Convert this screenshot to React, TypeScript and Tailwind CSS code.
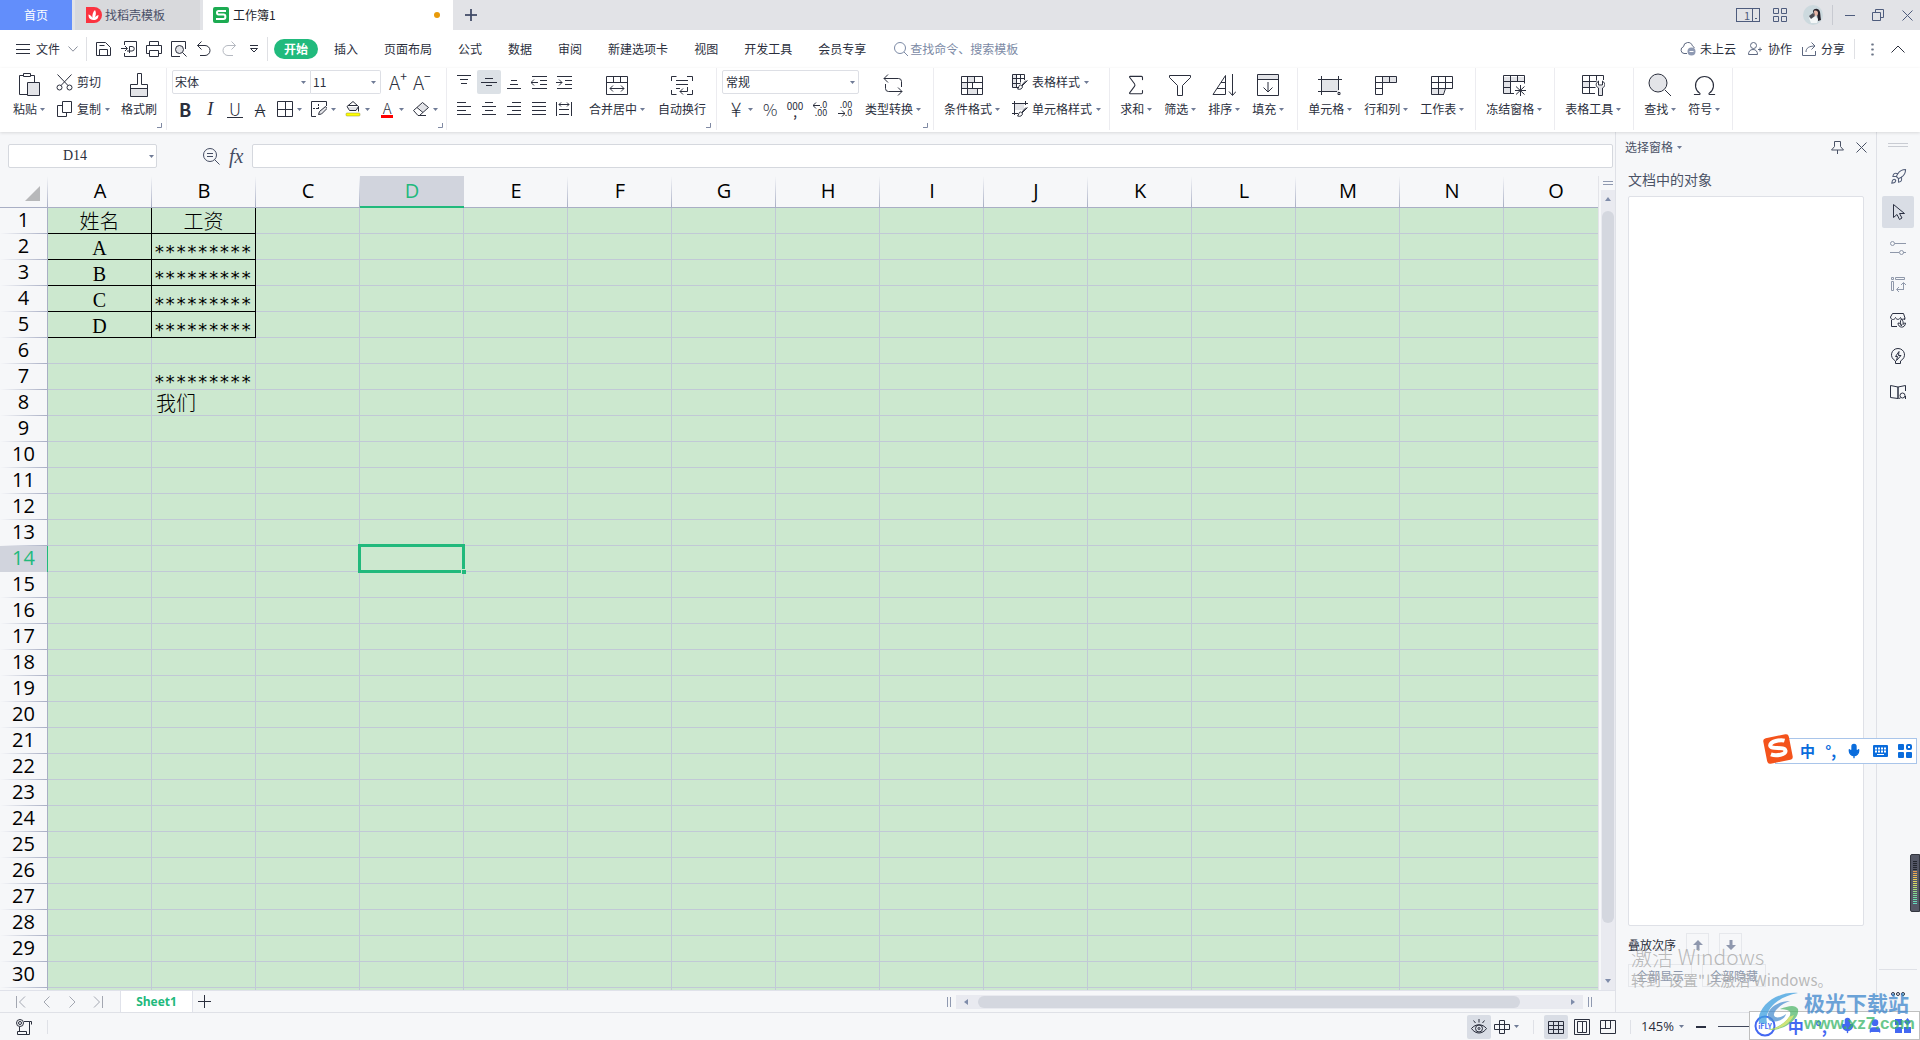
import type { ReactNode } from "react";
import { Mic, Omega, Rocket, Sigma, User } from "lucide-react";
import { clsx } from "clsx";

const COLUMNS = "ABCDEFGHIJKLMNO".split("");
const ROWS = Array.from({ length: 30 }, (_, i) => i + 1);
const STARS = "*********";

const CELLS: Record<string, string> = {
  A1: "姓名",
  B1: "工资",
  A2: "A",
  B2: STARS,
  A3: "B",
  B3: STARS,
  A4: "C",
  B4: STARS,
  A5: "D",
  B5: STARS,
  B7: STARS,
  B8: "我们",
};

const MENU_TABS = [
  "开始",
  "插入",
  "页面布局",
  "公式",
  "数据",
  "审阅",
  "新建选项卡",
  "视图",
  "开发工具",
  "会员专享",
];

interface IconProps {
  d: string;
  shade?: string;
  w?: number;
  h?: number;
  className?: string;
  children?: ReactNode;
}

function Icon({ d, shade, w = 16, h, className, children }: IconProps) {
  const height = h ?? w;
  return (
    <svg
      width={w}
      height={height}
      viewBox={`0 0 ${w} ${height}`}
      fill="none"
      stroke="currentColor"
      className={clsx("shrink-0", className)}
      aria-hidden="true"
    >
      {shade && <path d={shade} fill="#e3e4e8" stroke="none" />}
      <path d={d} />
      {children}
    </svg>
  );
}

function Caret({ className }: { className?: string }) {
  return (
    <svg
      width="5"
      height="3"
      viewBox="0 0 5 3"
      className={clsx("pointer-events-none shrink-0 fill-[#6f7b96]", className)}
      aria-hidden="true"
    >
      <path d="M0 0h5L2.5 3z" />
    </svg>
  );
}

function Group({ className, children }: { className?: string; children: ReactNode }) {
  return (
    <div className={clsx("flex h-[62px] shrink-0 border-r border-[#ececf0]", className)}>
      {children}
    </div>
  );
}

function Corner() {
  return <Icon w={5} d="M4.5 0v4.5H0" className="mb-0.5 self-end text-[#7f89a3]" />;
}

interface BigButtonProps {
  label: string;
  caret?: boolean;
  children: ReactNode;
}

function BigButton({ label, caret = true, children }: BigButtonProps) {
  return (
    <button className="flex shrink-0 flex-col items-center pt-[5px]">
      <span className="flex h-6 items-center justify-center">{children}</span>
      <span className="mt-1 flex items-center gap-[3px] leading-4 whitespace-nowrap">
        {label}
        {caret && <Caret />}
      </span>
    </button>
  );
}

function ToolButton({
  label,
  caret,
  children,
}: {
  label: string;
  caret?: boolean;
  children: ReactNode;
}) {
  return (
    <button aria-label={label} className="flex h-6 items-center gap-1">
      <span className="flex w-4 items-center justify-center">{children}</span>
      {caret && <Caret />}
    </button>
  );
}

function AlignButton({ label, d, active }: { label: string; d: string; active?: boolean }) {
  return (
    <button
      aria-label={label}
      className={clsx(
        "flex h-6 w-6 items-center justify-center rounded-xs",
        active && "bg-[#dce1e6]",
      )}
    >
      <Icon d={d} />
    </button>
  );
}

function TitleBar() {
  return (
    <header className="flex h-[30px] shrink-0 items-stretch bg-[#e2e3e7]">
      <button className="w-[72px] bg-[#628efb] text-white">首页</button>
      <button className="ml-[3px] flex w-[125px] items-center gap-[3px] bg-[#d8d9dc] pl-[11px] text-[#4a5068]">
        <svg width="16" height="16" viewBox="0 0 16 16" aria-hidden="true">
          <path d="M0 0h8a8 8 0 0 1 0 16H0z" fill="#fb3340" />
          <path
            d="M7.500 13C3 12.500 2.500 10 2.500 7.500c2 .5 3.500 2 4 3.500C6 8 7 4.500 9 3c1.500 2.500 1 5.500-.5 8 .8-1.500 2-2.500 4-3 0 3-1.500 5-5 5z"
            fill="#fff"
          />
        </svg>
        找稻壳模板
      </button>
      <button className="ml-[3px] flex w-[250px] items-center gap-1 bg-white pr-[13px] pl-[10px] text-[#1c1f2b]">
        <svg width="16" height="16" viewBox="0 0 16 16" aria-hidden="true">
          <rect width="16" height="16" rx="2" fill="#1cab52" />
          <path
            d="M13 4H5.500C3.500 4 3.500 7.500 5.500 7.500h5c2.500 0 2.500 4.500 0 4.500H3"
            fill="none"
            stroke="#fff"
            strokeWidth="2"
          />
        </svg>
        工作簿1
        <span className="ml-auto h-1.5 w-1.5 rounded-full bg-[#e89a0a]" />
      </button>
      <button aria-label="新建标签" className="ml-3 text-[#3f4a66]">
        <Icon w={12} d="M6 0v12M0 6h12">
          <path d="M6 0v12M0 6h12" strokeWidth="1.5" />
        </Icon>
      </button>
      <div className="ml-auto flex items-center pr-[7px] text-[#4e5c7d]">
        <button
          aria-label="窗口布局"
          className="mr-[13px] flex h-3.5 w-6 items-center justify-end border border-current text-[11px] leading-3"
        >
          <span className="pr-0.5">1</span>
          <Icon w={7} h={12} d="M.5 0v12M3 9.500h2" />
        </button>
        <button aria-label="应用" className="mr-4">
          <Icon w={14} d="M.5.5h5v5h-5zM8.500.5h5v5h-5zM.5 8.500h5v5h-5zM8.500 8.500h5v5h-5z" />
        </button>
        <button aria-label="账号" className="mr-[9px]">
          <svg width="20" height="20" viewBox="0 0 20 20" aria-hidden="true">
            <circle cx="10" cy="10" r="10" fill="#ccd9de" />
            <path d="M10 6c1-3 6-3 7 1 .5 3 .5 6 1 8l-3 1-1-7-3 1z" fill="#26222b" />
            <path d="M11 6c2-1 4 0 4 2s-1 3-2 3-2-2-2-5z" fill="#e6b7a8" />
            <path d="M6 13l6-2 3 3-1 4H8z" fill="#f3f6f7" />
            <path d="M6 11l4-3 2 3-4 3z" fill="#4b4a52" />
          </svg>
        </button>
        <span className="h-5 w-px bg-[#c8cad1]" />
        <button aria-label="最小化" className="ml-3">
          <Icon w={10} d="M0 5.500h10" />
        </button>
        <button aria-label="还原" className="ml-[17px]">
          <Icon w={12} d="M.5 3.500h8v8h-8zM3.500 3.500v-3h8v8h-3" />
        </button>
        <button aria-label="关闭" className="ml-[18px]">
          <Icon w={11} d="M.5.5l10 10M10.500.5l-10 10" />
        </button>
      </div>
    </header>
  );
}

function MenuBar() {
  return (
    <nav className="flex h-[38px] shrink-0 items-center bg-white">
      <button className="ml-4 flex items-center gap-1.5">
        <Icon w={14} d="M0 2.500h14M0 7.500h14M0 11.500h14" />
        文件
        <Icon w={10} h={6} d="M.5.5L5 5.200 9.500.5" className="ml-0.5 text-[#8a8f9c]" />
      </button>
      <span className="ml-2 h-6 w-px bg-[#dfe0e4]" />
      <div className="ml-[9px] flex items-center gap-[9px]">
        <button aria-label="保存">
          <Icon d="M.5 14.500v-13h9l5 5v8zM3.500 14.500v-6h8v6M3.500 4.500h5" />
        </button>
        <button aria-label="输出为PDF">
          <Icon d="M3.500 4V.5h12v15h-12V12M0 7.500h6M4 5l2.500 2.500L4 10M8.500 12V5.500H11a2 2 0 0 1 0 4.500H6" />
        </button>
        <button aria-label="打印">
          <Icon d="M3.500 4.500v-4h9v4M3.500 12.500h-3v-8h15v8h-3M3.500 9.500h9v6h-9z" />
        </button>
        <button aria-label="打印预览">
          <Icon d="M14.500 8V.5H.5v15H9M11.500 11.500l4 4">
            <circle cx="8.500" cy="8.500" r="4" fill="#e3e4e8" />
          </Icon>
        </button>
        <button aria-label="撤销">
          <Icon d="M5.500.5L1.500 4.500l4 4M1.500 4.500h7.500a5 5 0 0 1 0 10H4" />
        </button>
        <button aria-label="恢复" className="text-[#b5b9c1]">
          <Icon d="M10.500.5l4 4-4 4M14.500 4.500H7a5 5 0 0 0 0 10h5" />
        </button>
        <button aria-label="自定义" className="flex w-4 justify-center">
          <Icon w={8} d="M0 .5h8M.5 3.500h7L4 7z" />
        </button>
      </div>
      <span className="ml-[5px] h-6 w-px bg-[#dfe0e4]" />
      <div className="ml-[3px] flex items-center">
        {MENU_TABS.map((tab, i) => (
          <button
            key={tab}
            className={clsx(
              "mx-[3px] h-5 rounded-full px-2.5 leading-5 whitespace-nowrap",
              i === 0 && "bg-[#21ba7d] font-bold text-white",
            )}
          >
            {tab}
          </button>
        ))}
      </div>
      <label className="ml-[15px] flex items-center gap-0.5 text-[#7c8aa5]">
        <Icon w={14} d="M10 10l4 4">
          <circle cx="6" cy="6" r="5.500" />
        </Icon>
        <input
          aria-label="查找命令"
          placeholder="查找命令、搜索模板"
          className="w-32 bg-transparent outline-none placeholder:text-[#7c8aa5]"
        />
      </label>
      <div className="ml-auto flex shrink-0 items-center pr-[15px] text-[#2b2f3d]">
        <button className="flex items-center gap-1">
          <Icon
            d="M7 12.500H4a3.500 3.500 0 0 1-.5-6.800 4.500 4.500 0 0 1 8.800-1 4 4 0 0 1 2 2.300"
            className="text-[#5d6880]"
          >
            <circle cx="11.500" cy="10.500" r="4" fill="#8f9ab3" stroke="none" />
            <path d="M9.500 10.500h4" stroke="#fff" />
          </Icon>
          未上云
        </button>
        <button className="ml-3 flex items-center gap-1.5">
          <Icon
            w={14}
            d="M.5 12.500c0-3 1.500-5 4.500-5s4.500 2 4.500 5zM10 7.500h4M12 5.500v4"
            className="text-[#5d6880]"
          >
            <circle cx="5.500" cy="3.500" r="3" />
          </Icon>
          协作
        </button>
        <button className="ml-[10px] flex items-center gap-[5px]">
          <Icon
            w={14}
            d="M.5 5v8.500h13V9M4 10c0-4 3-6 9-6M9.500.5L13 4 9.500 7.500"
            className="text-[#5d6880]"
          />
          分享
        </button>
        <span className="ml-[9px] h-5 w-px bg-[#dfe0e4]" />
        <button aria-label="更多" className="ml-4">
          <Icon w={3} h={13} d="M.5 1.500h2M.5 6.500h2M.5 11.500h2" className="text-[#6b7486]">
            <path d="M.5 1.500h2M.5 6.500h2M.5 11.500h2" strokeWidth="2" />
          </Icon>
        </button>
        <button aria-label="收起功能区" className="ml-[17px]">
          <Icon w={14} h={8} d="M.5 7.500L7 1l6.500 6.500" />
        </button>
      </div>
    </nav>
  );
}

function Glyph({ children, className }: { children: ReactNode; className?: string }) {
  return <span className={className}>{children}</span>;
}

function Ribbon() {
  return (
    <div className="z-10 flex h-16 shrink-0 bg-white shadow-[0_1px_3px_rgba(0,0,0,0.12)]">
      <Group className="gap-[11px] pr-1 pl-[13px]">
        <BigButton label="粘贴">
          <Icon
            w={24}
            shade="M11 10h12v13H11z"
            d="M6.500 2.500h-4v19h8M13.500 2.500h4v7M6.500.5h7v3h-7zM10.500 9.500h12v13h-12z"
          />
        </BigButton>
        <div className="flex flex-col gap-[3px] pt-0.5">
          <button className="flex h-6 items-center gap-1">
            <Icon w={17} d="M1.500.5l10.500 11M15.500.5L5 11.500">
              <circle cx="3.500" cy="13.500" r="2.500" />
              <circle cx="13.500" cy="13.500" r="2.500" />
            </Icon>
            剪切
          </button>
          <button className="flex h-6 items-center gap-1">
            <Icon w={17} d="M6.500.5h9v11h-9zM6.500 4.500h-5v11h9v-4" />
            复制
            <Caret />
          </button>
        </div>
        <BigButton label="格式刷" caret={false}>
          <Icon
            w={24}
            shade="M4 16h16v7H4z"
            d="M10.500.5h4v11h6v12h-17v-12h7zM3.500 15.500h17"
          />
        </BigButton>
        <span className="-ml-[11px] flex">
          <Corner />
        </span>
      </Group>

      <Group className="pr-[3px] pl-[5px]">
        <div className="flex flex-col gap-[3px] pt-0.5">
          <div className="flex items-center">
            <div className="flex h-6 w-[139px] items-center rounded-l-xs border border-[#dddfe5] pr-1">
              <select aria-label="字体" className="flex-1 appearance-none pl-0.5 outline-none">
                <option>宋体</option>
              </select>
              <Caret />
            </div>
            <div className="flex h-6 w-[70px] items-center rounded-r-xs border border-l-0 border-[#dddfe5] pr-1">
              <select aria-label="字号" className="flex-1 appearance-none pl-0.5 outline-none">
                <option>11</option>
              </select>
              <Caret />
            </div>
            <button aria-label="增大字号" className="ml-2 flex h-6">
              <Glyph className="text-[19px] leading-6 font-light">A</Glyph>
              <span className="text-[12px] leading-3">+</span>
            </button>
            <button aria-label="减小字号" className="ml-1.5 flex h-6">
              <Glyph className="text-[19px] leading-6 font-light">A</Glyph>
              <span className="text-[12px] leading-3">−</span>
            </button>
          </div>
          <div className="flex gap-[9px] pl-[5px]">
            <ToolButton label="加粗">
              <Glyph className="text-[18px] leading-5 font-bold">B</Glyph>
            </ToolButton>
            <ToolButton label="倾斜">
              <Glyph className="font-['Liberation_Serif',serif] text-[19px] leading-5 italic">
                I
              </Glyph>
            </ToolButton>
            <ToolButton label="下划线">
              <Glyph className="border-b border-current px-0.5 text-[17px] leading-4 font-light">
                U
              </Glyph>
            </ToolButton>
            <ToolButton label="删除线">
              <Glyph className="px-0.5 text-[18px] leading-5 font-light line-through decoration-1">
                A
              </Glyph>
            </ToolButton>
            <ToolButton label="边框" caret>
              <Icon d="M.5.5h15v15H.5zM.5 8.500h15M8.500.5v15" />
            </ToolButton>
            <ToolButton label="绘制边框" caret>
              <Icon
                d="M5 15.500H.5V.5h15V5M7.500 13.500l1-3 6-5 1.500 2-5.500 5.500z"
                shade="M8 13l1-3 6-5 1 2-5 5z"
              >
                <path d="M2 7.500h6M7.500 3v6" strokeDasharray="2 1" />
              </Icon>
            </ToolButton>
            <ToolButton label="填充颜色" caret>
              <Icon
                d="M2 5.500L8 .5l5.500 5-2.500 4H4.500zM13.500 5.500v5M3 4.500h9"
                shade="M3 6h10l-2 3H5z"
              >
                <rect
                  x="1"
                  y="12"
                  width="14"
                  height="3"
                  rx="1"
                  fill="#ff0"
                  stroke="#8f8f3a"
                  strokeWidth=".5"
                />
              </Icon>
            </ToolButton>
            <ToolButton label="字体颜色" caret>
              <Glyph className="border-b-3 border-[#f00] px-0.5 text-[15px] leading-[14px] font-light">
                A
              </Glyph>
            </ToolButton>
            <ToolButton label="清除" caret>
              <Icon
                d="M.5 9.500L9.500 1.500l6 5-9 8H5zM4 6.500l6 5M5 14.500h8"
                shade="M5 6l5-4 5 5-5 4z"
              />
            </ToolButton>
          </div>
        </div>
        <Corner />
      </Group>

      <Group className="gap-[13px] pr-[5px] pl-[5px]">
        <div className="flex flex-col gap-[3px] pt-0.5">
          <div className="flex gap-px">
            <AlignButton label="顶端对齐" d="M1 1.500h14M4 5.500h8M5 9.500h6" />
            <AlignButton label="垂直居中" active d="M4 4.500h8M0 8.500h16M5 11.500h6" />
            <AlignButton label="底端对齐" d="M5 6.500h6M4 10.500h8M1 14.500h14" />
            <AlignButton
              label="减少缩进量"
              d="M1 2.500h15M9 6.500h7M9 10.500h7M1 14.500h15M0 8.500h7M3 5.500l-3 3 3 3"
            />
            <AlignButton
              label="增加缩进量"
              d="M1 2.500h15M9 6.500h7M9 10.500h7M1 14.500h15M0 8.500h6M3 5.500l3 3-3 3"
            />
          </div>
          <div className="flex gap-px">
            <AlignButton label="左对齐" d="M1 1.500h9M1 5.500h14M1 9.500h9M1 13.500h14" />
            <AlignButton label="居中" d="M4 1.500h8M1 5.500h14M4 9.500h8M1 13.500h14" />
            <AlignButton label="右对齐" d="M6 1.500h9M1 5.500h14M6 9.500h9M1 13.500h14" />
            <AlignButton label="两端对齐" d="M1 1.500h14M1 5.500h14M1 9.500h14M1 13.500h14" />
            <AlignButton
              label="分散对齐"
              d="M.5 1v14M15.500 1v14M3 3.500h10M5 1.500l-2 2 2 2M11 1.500l2 2-2 2M3 8.500h10M3 13.500h10"
            />
          </div>
        </div>
        <BigButton label="合并居中">
          <Icon
            w={24}
            d="M1.500 3.500h21v18h-21zM1.500 9.500h21M8.500 3.500v6M15.500 3.500v6M5 15.500h14M8 12.500l-3 3 3 3M16 12.500l3 3-3 3"
          />
        </BigButton>
        <BigButton label="自动换行" caret={false}>
          <Icon
            w={24}
            d="M1.500 8V3.500h5M17 3.500h5.500V8M1.500 17v4.500h5M17 21.500h5.500V17M6 7.500h12M6 11.500h12M6 15.500h4M17.500 14v4.500H10M13 15.500l-3 3 3 3"
          />
        </BigButton>
        <span className="-ml-[13px] flex">
          <Corner />
        </span>
      </Group>

      <Group className="gap-1.5 pr-[5px] pl-[5px]">
        <div className="flex flex-col gap-[3px] pt-0.5">
          <div className="flex h-6 w-[137px] items-center rounded-xs border border-[#dddfe5] pr-[3px]">
            <select aria-label="数字格式" className="flex-1 appearance-none pl-[3px] outline-none">
              <option>常规</option>
            </select>
            <Caret />
          </div>
          <div className="flex gap-[9px] pl-1.5">
            <ToolButton label="货币" caret>
              <Glyph className="text-[20px] leading-5 font-light">¥</Glyph>
            </ToolButton>
            <ToolButton label="百分比">
              <Glyph className="text-[16px] leading-5 font-light">%</Glyph>
            </ToolButton>
            <ToolButton label="千位分隔">
              <span className="flex flex-col items-center text-[10px] leading-[7px]">
                <span>000</span>
                <span className="font-bold">,</span>
              </span>
            </ToolButton>
            <ToolButton label="增加小数位数">
              <span className="flex flex-col items-end text-[9px] leading-2 whitespace-nowrap">
                <span className="flex items-center">
                  <Icon w={7} d="M0 3.500h7M3 .5l-3 3 3 3" />
                  .0
                </span>
                <span>.00</span>
              </span>
            </ToolButton>
            <ToolButton label="减少小数位数">
              <span className="flex flex-col items-end text-[9px] leading-2 whitespace-nowrap">
                <span>.00</span>
                <span className="flex items-center">
                  <Icon w={7} d="M0 3.500h7M4 .5l3 3-3 3" />
                  .0
                </span>
              </span>
            </ToolButton>
          </div>
        </div>
        <BigButton label="类型转换">
          <Icon
            w={24}
            d="M7 1.500l-4 4 4 4M3 5.500h14.500a3 3 0 0 1 3 3V14M17 14.500l4 4-4 4M21 18.500H7.500a3 3 0 0 1-3-3V11"
          />
        </BigButton>
        <span className="-ml-1 flex">
          <Corner />
        </span>
      </Group>

      <Group className="gap-3 pr-2 pl-2.5">
        <BigButton label="条件格式">
          <Icon
            w={24}
            shade="M8 4h7v6H8zM8 16h10v5H8zM2 10h6v6H2z"
            d="M1.500 3.500h21v18h-21zM1.500 9.500h21M1.500 15.500h21M7.500 3.500v18M14.500 3.500v6M12.500 9.500v6M17.500 15.500v6"
          />
        </BigButton>
        <div className="flex flex-col gap-[3px] pt-0.5">
          <button className="flex h-6 items-center gap-1 whitespace-nowrap">
            <Icon
              shade="M1 1h4v12H1z"
              d="M7 13.500H.5V.5h12V6M.5 4.500h12M.5 9.500h8M4.500.5v13M8.500.5v8M15.500 6.500L10 12M8.500 11c-2 0-1.500 3-3 4 3 1 5-.5 5-2.500zM10 11l4-4.500"
            />
            表格样式
            <Caret />
          </button>
          <button className="flex h-6 items-center gap-1 whitespace-nowrap">
            <Icon
              shade="M3 3h9v6H3z"
              d="M2.500 0v14M0 2.500h16M13.500 0v4M0 12.500h6M15.500 6.500L10 12M8.500 11c-2 0-1.500 3-3 4 3 1 5-.5 5-2.500zM10 11l4-4.500"
            />
            单元格样式
            <Caret />
          </button>
        </div>
      </Group>

      <Group className="gap-3 pr-[13px] pl-2.5">
        <BigButton label="求和">
          <Sigma size={26} strokeWidth={1} />
        </BigButton>
        <BigButton label="筛选">
          <Icon w={24} d="M1.500 2.500h21v2l-8 8v10h-5v-10l-8-8z" />
        </BigButton>
        <BigButton label="排序">
          <Icon
            w={24}
            d="M1 21.500L13.500 2.500v19zM5 15.500h8.500M9 9.500h4.500M20.500 1v21M17 18.500l3.500 4 3.500-4"
          />
        </BigButton>
        <BigButton label="填充">
          <Icon
            w={24}
            shade="M2 2h20v4H2z"
            d="M1.500 1.500h21v21h-21zM1.500 6.500h21M12 9v10M7.500 14.500l4.500 4.500 4.500-4.500"
          />
        </BigButton>
      </Group>

      <Group className="gap-3 pr-[11px] pl-2.5">
        <BigButton label="单元格">
          <Icon
            w={24}
            shade="M4 7h17v12H4z"
            d="M0 6.500h24M0 18.500h19M3.500 3v19M20.500 3v14M20 19.500h2v2h-2z"
          />
        </BigButton>
        <BigButton label="行和列">
          <Icon
            w={24}
            shade="M9 4h13v5H9z"
            d="M1.500 3.500h21v6h-14v12h-7zM8.500 3.500v6h-7M15.500 3.500v6M1.500 15.500h7"
          />
        </BigButton>
        <BigButton label="工作表">
          <Icon
            w={24}
            shade="M2 16h7v5H2zM9 16h6l-2 5H9z"
            d="M14 21.500H1.500v-18h21v12h-21M1.500 9.500h21M8.500 3.500v18M15.500 3.500v12l-2 6"
          />
        </BigButton>
      </Group>

      <Group className="pr-3 pl-2.5">
        <BigButton label="冻结窗格">
          <Icon
            w={24}
            shade="M2 4h20v5H2zM2 9h6v12H2z"
            d="M12 20.500H1.500v-18h21v8M1.500 8.500h21M8.500 2.500v18M15.500 2.500v6M1.500 14.500h7M18.500 12v11M13 17.500h11M14 13.500l8.500 8M22.500 13.500l-8.500 8"
          />
        </BigButton>
      </Group>

      <Group className="pr-3 pl-2.5">
        <BigButton label="表格工具">
          <Icon
            w={24}
            shade="M2 9h6v6H2zM17 13h5v9h-5z"
            d="M14 20.500H1.500v-18h21V7M1.500 8.500h14M1.500 14.500h13M8.500 2.500v18M15.500 2.500v5M17.500 8c-4 3-2 6 0 7v7.500h4V15c2-1 4-4 0-7v4h-4z"
          />
        </BigButton>
      </Group>

      <Group className="gap-3 pr-3 pl-2.5">
        <BigButton label="查找">
          <Icon w={24} d="M17 17l6 6">
            <circle cx="10" cy="10" r="9" fill="#e3e4e8" />
          </Icon>
        </BigButton>
        <BigButton label="符号">
          <Omega size={27} strokeWidth={1} />
        </BigButton>
      </Group>
    </div>
  );
}

function FormulaBar() {
  return (
    <div className="flex h-11 shrink-0 items-start pt-3 pr-0.5 pl-2">
      <div className="flex h-6 w-[149px] items-center rounded-xs border border-[#d5d8de] bg-white pr-0.5">
        <input
          aria-label="名称框"
          defaultValue="D14"
          className="min-w-0 flex-1 pr-3 pl-1 text-center font-['Liberation_Serif',serif] text-sm outline-none"
        />
        <Caret />
      </div>
      <div className="ml-[46px] flex h-6 items-center gap-[9px] text-[#454d63]">
        <button aria-label="放大">
          <Icon w={17} d="M11.500 11.500l5 5M4 5.500h6M4 8.500h6">
            <circle cx="7" cy="7" r="6.500" />
          </Icon>
        </button>
        <button
          aria-label="插入函数"
          className="font-['Liberation_Serif',serif] text-[20px] leading-5 italic"
        >
          fx
        </button>
      </div>
      <input
        aria-label="编辑栏"
        className="ml-[9px] h-6 min-w-0 flex-1 rounded-xs border border-[#d5d8de] bg-white px-2 outline-none"
      />
    </div>
  );
}

function Cell({ col, row }: { col: string; row: number }) {
  const value = CELLS[`${col}${row}`];
  const bordered = (col === "A" || col === "B") && row <= 5;
  const selected = col === "D" && row === 14;
  return (
    <td
      className={clsx(
        "h-[26px] border-r border-b p-0 whitespace-nowrap",
        bordered ? "border-black text-center" : "border-[#c1c9d6]",
        selected && "relative",
      )}
    >
      {value === STARS ? (
        <span className="block h-[25px] pt-2 pl-0.5 text-left font-['DejaVu_Sans_Mono',monospace] text-[18px] leading-5">
          {value}
        </span>
      ) : (
        value && (
          <span
            className={clsx(
              "block h-[25px] font-['Liberation_Serif','Noto_Sans_CJK_SC',serif] text-[20px] leading-[29px] font-light",
              !bordered && "pl-1",
            )}
          >
            {value}
          </span>
        )
      )}
      {selected && (
        <span className="absolute -top-0.5 -right-0.5 -bottom-0.5 -left-0.5 border-3 border-[#21b97c]">
          <span className="absolute -right-1 -bottom-1 h-[5px] w-[5px] border-t border-l border-[#cce8cf] bg-[#21b97c]" />
        </span>
      )}
    </td>
  );
}

function Sheet() {
  return (
    <div className="min-w-0 flex-1 overflow-hidden border-r border-[#e3e4e9]">
      <table className="w-[1608px] table-fixed border-separate border-spacing-0 bg-[#cce8cf] text-black">
        <colgroup>
          <col className="w-12" />
          {COLUMNS.map((col) => (
            <col key={col} className="w-[104px]" />
          ))}
        </colgroup>
        <thead>
          <tr>
            <th className="h-8 border-b border-[#a9afc5] bg-[#f6f7f9] bg-[linear-gradient(to_bottom,#f6f7f9,#a9afc5)] bg-[length:1px_100%] bg-right bg-no-repeat p-0">
              <Icon w={15} d="" className="mt-1 ml-[25px]">
                <path d="M15 0v15H0z" fill="#b7b8ba" stroke="none" />
              </Icon>
            </th>
            {COLUMNS.map((col) => (
              <th
                key={col}
                className={clsx(
                  "h-8 p-0 align-top font-['Open_Sans',sans-serif] text-[20px] leading-[30px] font-normal",
                  col === "D"
                    ? "border-b-2 border-[#21b97c] bg-[#d1d4dd] text-[#21b97c]"
                    : "border-b border-[#a9afc5] bg-[#f6f7f9] bg-[linear-gradient(to_bottom,#f6f7f9,#a9afc5)] bg-[length:1px_100%] bg-right bg-no-repeat",
                )}
              >
                {col}
              </th>
            ))}
          </tr>
        </thead>
        <tbody>
          {ROWS.map((row) => (
            <tr key={row}>
              <th
                className={clsx(
                  "h-[26px] border-r p-0 align-top font-['Open_Sans',sans-serif] text-[20px] leading-6 font-normal",
                  row === 14
                    ? "border-[#21b97c] bg-[#d1d4dd] text-[#21b97c]"
                    : "border-[#a9afc5] bg-[#f6f7f9] bg-[linear-gradient(to_right,#f6f7f9,#a9afc5)] bg-[length:100%_1px] bg-bottom bg-no-repeat",
                )}
              >
                {row}
              </th>
              {COLUMNS.map((col) => (
                <Cell key={col} col={col} row={row} />
              ))}
            </tr>
          ))}
          <tr>
            <th className="h-[26px] border-r border-[#a9afc5] bg-[#f6f7f9]" />
            {COLUMNS.map((col) => (
              <td key={col} className="border-r border-[#c1c9d6]" />
            ))}
          </tr>
        </tbody>
      </table>
    </div>
  );
}

function VerticalScroll() {
  return (
    <div className="flex w-4 shrink-0 flex-col items-center pl-0.5">
      <Icon w={10} h={4} d="M0 .5h10M0 3.500h10" className="mt-[5px] text-[#8f99b0]" />
      <div className="mt-[5px] flex w-full flex-1 flex-col items-center bg-[#e9eaf0] py-[7px]">
        <Icon w={6} h={4} d="" className="text-[#7f8caa]">
          <path d="M0 4l3-4 3 4z" fill="currentColor" stroke="none" />
        </Icon>
        <div className="mt-2.5 w-3 flex-1 rounded-full bg-[#d4d7df]" />
        <Icon w={6} h={4} d="" className="mt-14 text-[#7f8caa]">
          <path d="M0 0l3 4 3-4z" fill="currentColor" stroke="none" />
        </Icon>
      </div>
    </div>
  );
}

function SheetTabs() {
  return (
    <div className="flex h-[22px] shrink-0 items-center border-t border-[#e0e2ea]">
      <div className="flex items-center gap-[17px] pl-4 text-[#a3a7b1]">
        <button aria-label="第一个工作表">
          <Icon w={10} h={12} d="M.5 0v12M9 .5L3.500 6 9 11.500" />
        </button>
        <button aria-label="上一个工作表">
          <Icon w={7} h={12} d="M6.500.5L1 6l5.500 5.500" />
        </button>
        <button aria-label="下一个工作表" className="ml-0.5">
          <Icon w={7} h={12} d="M.5.5L6 6 .5 11.500" />
        </button>
        <button aria-label="最后一个工作表">
          <Icon w={10} h={12} d="M9.500 0v12M1 .5L6.500 6 1 11.500" />
        </button>
      </div>
      <button className="ml-[17px] h-[21px] w-[73px] self-start border-x border-[#e0e2ea] bg-white font-['Open_Sans',sans-serif] font-bold text-[#21b97c]">
        Sheet1
      </button>
      <button aria-label="新建工作表" className="ml-[5px]">
        <Icon w={13} d="M6.500 0v13M0 6.500h13" />
      </button>
      <div className="ml-auto flex w-[668px] items-center gap-[5px] pr-[23px] text-[#8f99b0]">
        <Icon w={4} h={10} d="M.5 0v10M3.500 0v10" />
        <div className="flex h-3.5 flex-1 items-center bg-[#e9eaf0] px-2">
          <Icon w={4} h={6} d="" className="text-[#7f8caa]">
            <path d="M4 0L0 3l4 3z" fill="currentColor" stroke="none" />
          </Icon>
          <div className="mr-[51px] ml-2.5 h-3 flex-1 rounded-full bg-[#d4d7df]" />
          <Icon w={4} h={6} d="" className="text-[#7f8caa]">
            <path d="M0 0l4 3-4 3z" fill="currentColor" stroke="none" />
          </Icon>
        </div>
        <Icon w={4} h={10} d="M.5 0v10M3.500 0v10" />
      </div>
    </div>
  );
}

function SelectionPane() {
  return (
    <aside className="flex w-[261px] shrink-0 flex-col border-r border-[#dfe1e7] text-[#4a5266]">
      <div className="flex h-[30px] items-center pr-[9px] pl-[9px]">
        <button className="flex items-center gap-1">
          选择窗格
          <Caret />
        </button>
        <button aria-label="固定" className="mr-3 ml-auto">
          <Icon w={13} d="M3.500.5h6v5l3 3.500h-12l3-3.500zM6.500 9v4" />
        </button>
        <button aria-label="关闭窗格">
          <Icon w={11} d="M.5.5l10 10M10.500.5l-10 10" />
        </button>
      </div>
      <h2 className="mt-[7px] pl-3 text-sm leading-5">文档中的对象</h2>
      <div className="mx-3 mt-[7px] flex-1 rounded-xs border border-[#dfe1e7] bg-white" />
      <div className="mt-[7px] flex items-center pl-3 text-[#2b2f3d]">
        叠放次序
        <button
          aria-label="上移一层"
          className="ml-2.5 flex h-[23px] w-[23px] items-center justify-center border border-[#e6e8ec] text-[#8f98ae]"
        >
          <svg width="10" height="10" viewBox="0 0 10 10" fill="currentColor">
            <path d="M5 0l5 5H6.500v5h-3V5H0z" />
          </svg>
        </button>
        <button
          aria-label="下移一层"
          className="ml-2.5 flex h-[23px] w-[23px] items-center justify-center border border-[#e6e8ec] text-[#8f98ae]"
        >
          <svg width="10" height="10" viewBox="0 0 10 10" fill="currentColor">
            <path d="M5 10l5-5H6.500V0h-3v5H0z" />
          </svg>
        </button>
      </div>
      <div className="mt-2 mb-[25px] flex gap-2.5 pl-3 text-[#8d97ac]">
        <button className="h-[23px] w-16 border border-[#e6e8ec] leading-5">全部显示</button>
        <button className="h-[23px] w-16 border border-[#e6e8ec] leading-5">全部隐藏</button>
      </div>
    </aside>
  );
}

function SideRail() {
  return (
    <aside className="flex w-[43px] shrink-0 flex-col items-center pr-px text-[#2b3042]">
      <Icon w={20} h={4} d="M0 .5h20M0 3.500h20" className="mt-[11px] text-[#c9ccd3]" />
      <button
        aria-label="快捷"
        className="mt-[13px] flex h-8 w-8 items-center justify-center text-[#525d78]"
      >
        <Rocket size={17} strokeWidth={1.500} />
      </button>
      <button
        aria-label="选择"
        className="mt-1 flex h-8 w-8 items-center justify-center rounded-xs bg-[#d9dde5]"
      >
        <Icon d="M3.500.5v13l3.500-3 2.500 5 2.500-1.500L9.500 9.500h5z" />
      </button>
      <button
        aria-label="属性"
        className="mt-1 flex h-8 w-8 items-center justify-center text-[#8f98aa]"
      >
        <Icon d="M4.500 3.500H16M0 12.500h9M13 12.500h3">
          <circle cx="2.500" cy="3.500" r="2" />
          <circle cx="11.500" cy="12.500" r="2" />
        </Icon>
      </button>
      <button
        aria-label="分析"
        className="mt-1 flex h-8 w-8 items-center justify-center text-[#8f98aa]"
      >
        <Icon d="M1.500 1.500h2v2h-2zM5.500 1.500h9v2h-9zM1.500 5.500h2v9h-2zM13.500 14V7M11 9l2.500-2.500L16 9M14 13.500H7M9 11l-2.500 2.500L9 16" />
      </button>
      <button aria-label="稻壳资源" className="mt-1 flex h-8 w-8 items-center justify-center">
        <Icon d="M7 14.500H1.500V8M14.500 8l.5-2-1.500-4.500h-11L.5 5c0 3 4 3.500 5 .5 1 2.500 4 2.500 5 0 .5 2 3 2.500 4.500.5M8 11c0 5 7 6 7.500 0-1 0-2 .5-2.500 1.500.5-2 0-4-1.500-5.500-1.500 2-1.500 4 0 7-.5-2-1.500-3-3.500-3z" />
      </button>
      <button aria-label="推荐" className="mt-1 flex h-8 w-8 items-center justify-center">
        <Icon d="M5.500 15.500v-2.500C-1.500 9 1.500.5 8 .5s9.500 8.500 2.500 12.500v2.500zM9 3.500L5.500 8.500h2l-1 4L11 7.500H8.500z" />
      </button>
      <button aria-label="学习" className="mt-1 flex h-8 w-8 items-center justify-center">
        <Icon d="M8 14.500L.5 13.500V1.500L8 3zM8 14.500V3l7.500-1.500V7M8.500 14.500l2-.5M15.500 15v-3">
          <circle cx="12.500" cy="11.500" r="2.500" />
        </Icon>
      </button>
      <span className="mt-auto mb-[22px] h-px w-[38px] bg-[#dfe1e7]" />
      <button aria-label="更多工具" className="mb-4">
        <Icon w={16} h={4} d="">
          <circle cx="3" cy="2" r="1.500" />
          <circle cx="8" cy="2" r="1.500" />
          <circle cx="13" cy="2" r="1.500" />
        </Icon>
      </button>
    </aside>
  );
}

function StatusBar() {
  return (
    <footer className="flex h-7 shrink-0 items-center border-t border-[#dfe1e7]">
      <button aria-label="宏" className="ml-4">
        <Icon d="M8 2.500h5.500v13h-12v-3h9v3M13.500 2.500h2v3M3.500 8v4">
          <circle cx="4" cy="4" r="3.500" />
          <circle cx="4" cy="4" r="1.500" />
        </Icon>
      </button>
      <span className="ml-[15px] h-3.5 w-px bg-[#dfe1e7]" />
      <div className="ml-auto flex w-[453px] items-center">
        <button
          aria-label="护眼模式"
          className="flex h-6 w-6 items-center justify-center rounded-xs bg-[#d9dde5]"
        >
          <Icon d="M.5 9.500c4-5 11-5 15 0-4 6-11 6-15 0zM8 0v3.500M2.500 1.500l2 2.500M13.500 1.500l-2 2.500">
            <circle cx="8" cy="9.500" r="3.500" />
            <circle cx="8" cy="9.500" r="1" />
          </Icon>
        </button>
        <button aria-label="阅读模式" className="ml-[3px] flex items-center gap-1">
          <Icon d="M5.500 1.500h5v13h-5zM.5 5.500h15v5H.5z" />
          <Caret />
        </button>
        <span className="ml-[14px] h-3.5 w-px bg-[#dfe1e7]" />
        <button
          aria-label="普通视图"
          className="ml-2.5 flex h-6 w-6 items-center justify-center rounded-xs bg-[#d9dde5]"
        >
          <Icon d="M.5 2.500h15v12H.5zM.5 6.500h15M.5 10.500h15M5.500 2.500v12M10.500 2.500v12" />
        </button>
        <button aria-label="分页预览" className="ml-1.5">
          <Icon d="M.5.5h15v15H.5zM3.500 2.500h5v11h-5zM8.500 2.500h4v11h-4z" />
        </button>
        <button aria-label="页面布局视图" className="ml-2.5">
          <Icon d="M.5 1.500h15v13H.5zM.5 9.500h10v-8M5.500 1.500v8" />
        </button>
        <span className="ml-[14px] h-3.5 w-px bg-[#dfe1e7]" />
        <button className="ml-[10px] flex items-center gap-[5px] font-['Open_Sans',sans-serif] text-[13px]">
          145%
          <Caret />
        </button>
        <button aria-label="缩小" className="ml-3 h-0.5 w-2.5 bg-[#2b3042]" />
        <span className="ml-3 h-px flex-1 bg-[#3f465a]" />
      </div>
    </footer>
  );
}

function ImeBar() {
  return (
    <div className="absolute right-[3px] bottom-[276px] flex h-[26px] w-[142px] items-center border border-[#a9c5ea] bg-white pl-6 text-[#0a6cdc]">
      <svg
        width="32"
        height="32"
        viewBox="0 0 32 32"
        className="absolute -top-1.5 -left-3.5"
        aria-hidden="true"
      >
        <g transform="rotate(-11 16 16)">
          <rect x="3" y="3" width="26" height="26" rx="3" fill="#f4531c" />
          <path
            d="M24 9c-4-2-14-2-15 2-.5 5 14 3 14 8 0 4-10 4-15 1"
            fill="none"
            stroke="#fff"
            strokeWidth="4"
          />
        </g>
      </svg>
      <div className="flex flex-1 items-center justify-between pr-1 text-[15px] font-bold">
        <span>中</span>
        <span>°,</span>
        <Mic size={16} fill="currentColor" />
        <svg width="15" height="12" viewBox="0 0 15 12" aria-hidden="true">
          <rect width="15" height="12" rx="1" fill="currentColor" />
          <path d="M2 3.500h11M2 6.500h11" stroke="#fff" strokeWidth="2" strokeDasharray="2 1" />
          <path d="M4 9.500h7" stroke="#fff" />
        </svg>
        <svg width="14" height="14" viewBox="0 0 14 14" fill="currentColor" aria-hidden="true">
          <rect width="6" height="6" rx="1" />
          <rect y="8" width="6" height="6" rx="1" />
          <rect x="8" y="8" width="6" height="6" rx="1" />
          <rect
            x="9"
            y="1"
            width="4"
            height="4"
            rx="1"
            fill="none"
            stroke="currentColor"
            strokeWidth="2"
          />
        </svg>
      </div>
    </div>
  );
}

function LevelMeter() {
  return (
    <div className="absolute right-0 bottom-[128px] flex h-[58px] w-2.5 items-center justify-center rounded-l-xs border border-[#33363f] bg-[#555866]">
      <span className="h-11 w-1 bg-[repeating-linear-gradient(to_bottom,transparent_0,transparent_1px,#555866_1px,#555866_2px),linear-gradient(to_bottom,#22252e_0%,#22252e_22%,#f0a050_24%,#e0dc60_50%,#7fdc90_75%,#5fdcc8_100%)]" />
    </div>
  );
}

function Watermarks() {
  return (
    <>
      <div className="pointer-events-none absolute right-[93px] bottom-[50px] w-[196px] whitespace-nowrap text-[#a8a8a8]/80">
        <p className="text-[21px] leading-7 font-light">激活 Windows</p>
        <p className="text-[15px] leading-5">转到"设置"以激活 Windows。</p>
      </div>
      <div className="absolute right-0 bottom-0 flex h-[29px] w-[171px] items-center justify-between border border-[#bfbfbf] bg-white pr-2 pl-1 text-base font-bold text-[#4468f2]">
        <svg width="22" height="22" viewBox="0 0 22 22" aria-hidden="true">
          <circle cx="11" cy="11" r="9.500" fill="#fff" stroke="currentColor" strokeWidth="2" />
          <text x="11" y="14" textAnchor="middle" fontSize="7" fill="currentColor">
            iFLY
          </text>
        </svg>
        <span>中</span>
        <span>°,</span>
        <Mic size={17} fill="currentColor" />
        <User size={16} fill="currentColor" />
        <svg width="16" height="16" viewBox="0 0 16 16" fill="currentColor" aria-hidden="true">
          <path d="M0 1h7v6H0zM0 9h7v6H0zM9 9h7v6H9zM12.500 0L16 4l-3.500 3.500L9 4z" />
        </svg>
      </div>
      <div className="pointer-events-none absolute right-2.5 bottom-1.5 flex items-center gap-1 opacity-75">
        <svg width="44" height="42" viewBox="0 0 44 42" aria-hidden="true">
          <path d="M42 2C18 0 0 18 3 32c5 1 6 1 8 0C8 20 20 6 42 2z" fill="#3d9fe0" />
          <path
            d="M34 10C18 10 8 22 13 29c5 4 16 0 17-6-6 5-13 4-12 0 1-5 9-11 16-13z"
            fill="#4c90d0"
          />
          <path
            d="M24 18c8-3 15-5 18 0 2 10-14 22-30 21 14-3 24-13 22-18-2-3-6-2-10-3z"
            fill="#52b86c"
          />
          <path d="M38 24c-4 9-14 15-26 15 10-2 16-6 21-13z" fill="#bfdc4a" />
        </svg>
        <div className="w-[106px] whitespace-nowrap">
          <p className="text-[21px] leading-6 font-bold text-[#3d86cc]">极光下载站</p>
          <p className="font-['Liberation_Sans',sans-serif] text-[17px] leading-5 font-bold text-[#37b567]">
            www.xz7.com
          </p>
        </div>
      </div>
    </>
  );
}

export default function App() {
  return (
    <div className="relative flex h-screen flex-col overflow-hidden bg-[#f6f7f9] font-['Noto_Sans_CJK_SC',sans-serif] text-xs text-[#2b2f3d]">
      <TitleBar />
      <MenuBar />
      <Ribbon />
      <div className="flex min-h-0 flex-1">
        <main className="flex min-w-0 flex-1 flex-col border-r border-[#dfe1e7]">
          <FormulaBar />
          <div className="flex min-h-0 flex-1">
            <Sheet />
            <VerticalScroll />
          </div>
          <SheetTabs />
        </main>
        <SelectionPane />
        <SideRail />
      </div>
      <StatusBar />
      <ImeBar />
      <LevelMeter />
      <Watermarks />
    </div>
  );
}
